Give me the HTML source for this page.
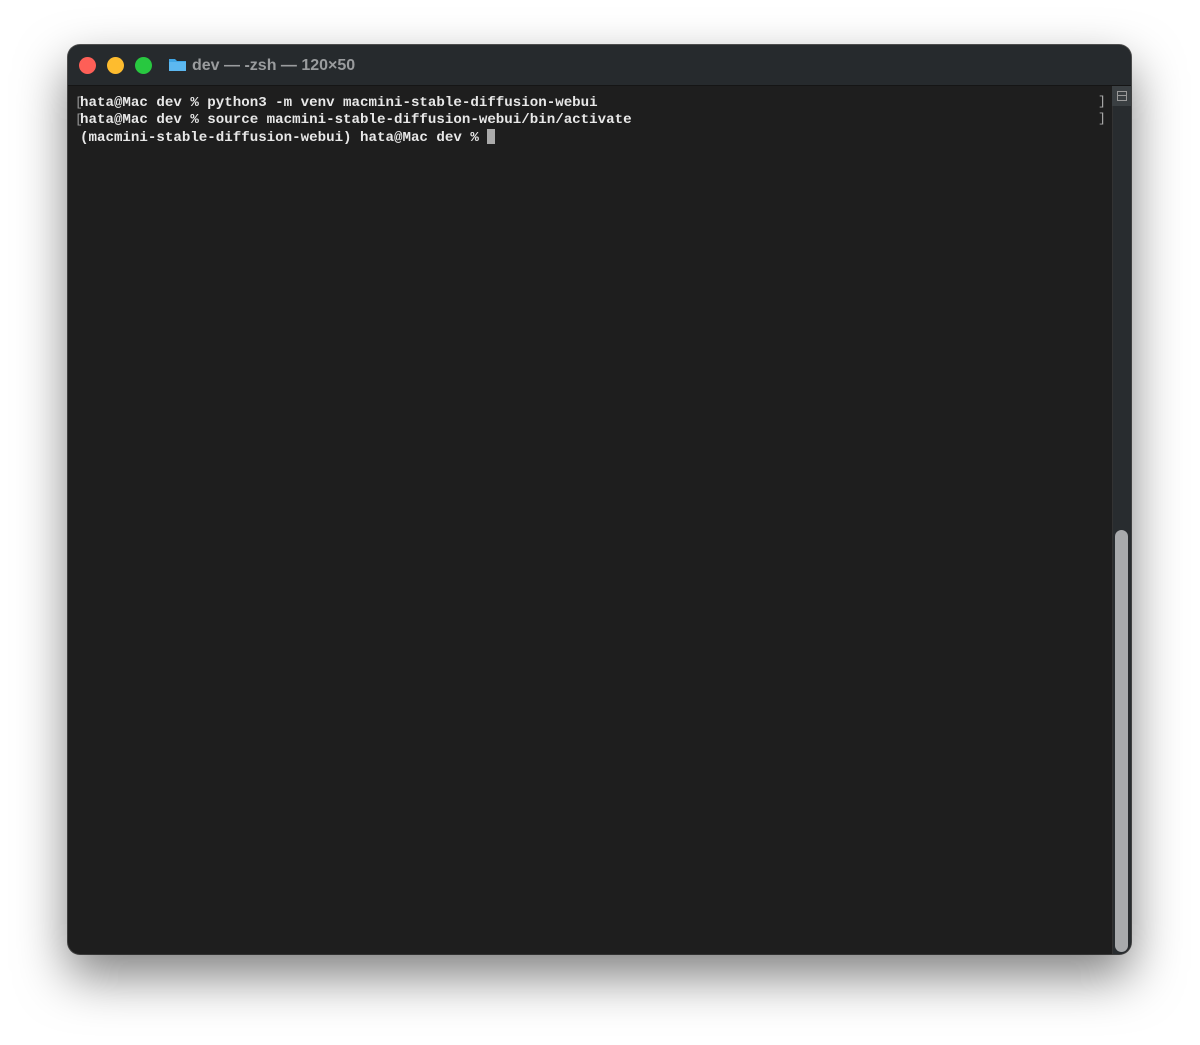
<!DOCTYPE html>
<html><head><style>
body{margin:0;width:1200px;height:1045px;background:#fff;position:relative;overflow:hidden}
.win{position:absolute;left:68px;top:45px;width:1063px;height:909px;border-radius:12px;background:#1e1e1e;box-shadow:0 22px 50px rgba(0,0,0,.5),0 0 0 1px #555;overflow:hidden}
.tb{position:absolute;left:0;top:0;width:100%;height:40px;background:#262a2d;border-bottom:1px solid #151515}
.dot{position:absolute;top:12px;width:17px;height:17px;border-radius:50%}
.title{position:absolute;left:124px;top:12px;font:bold 16px "Liberation Sans",sans-serif;color:#9a9c9e}
.term{position:absolute;left:12px;top:50px;font:bold 14.15px/17px "Liberation Mono",monospace;color:#e8e8e8;white-space:pre}
.lb{position:absolute;left:7px;font:13px "Liberation Mono",monospace;color:#999}
.track{position:absolute;left:1044px;top:41px;width:19px;height:868px;background:#282c2f;border-left:1px solid #333}
.thumb{position:absolute;left:1047px;top:485px;width:13px;height:422px;border-radius:7px;background:#a8aaac}
.btn{position:absolute;left:1044px;top:41px;width:19px;height:20px;background:#3a3f42}
.cur{display:inline-block;width:8px;height:15px;background:#aaa;vertical-align:-3px}
.br{position:absolute;left:1030px;font:13px "Liberation Mono",monospace;color:#aaa}
</style></head><body>
<div class="win">
<div class="tb">
<div class="dot" style="left:11px;background:#fe5f57"></div>
<div class="dot" style="left:39px;background:#febc2e"></div>
<div class="dot" style="left:67px;background:#28c840"></div>
<svg style="position:absolute;left:100px;top:12px" width="19" height="15" viewBox="0 0 19 15"><path d="M1 2h6l2 2h9v10H1z" fill="#3fa6e6"/><rect x="1" y="5" width="17" height="9" fill="#5cb8f0"/></svg>
<div class="title">dev — -zsh — 120×50</div>
</div>
<div class="lb" style="top:50px">[</div><div class="lb" style="top:67px">[</div>
<div class="term">hata@Mac dev % python3 -m venv macmini-stable-diffusion-webui
hata@Mac dev % source macmini-stable-diffusion-webui/bin/activate
(macmini-stable-diffusion-webui) hata@Mac dev % <span class="cur"></span></div>
<div class="br" style="top:49px">]</div><div class="br" style="top:66px">]</div>
<div class="track"></div>
<div class="btn"><div style="position:absolute;left:5px;top:5px;width:8px;height:8px;border:1px solid #999"><div style="margin-top:3px;height:1px;background:#999"></div></div></div>
<div class="thumb"></div>
</div>
</body></html>
